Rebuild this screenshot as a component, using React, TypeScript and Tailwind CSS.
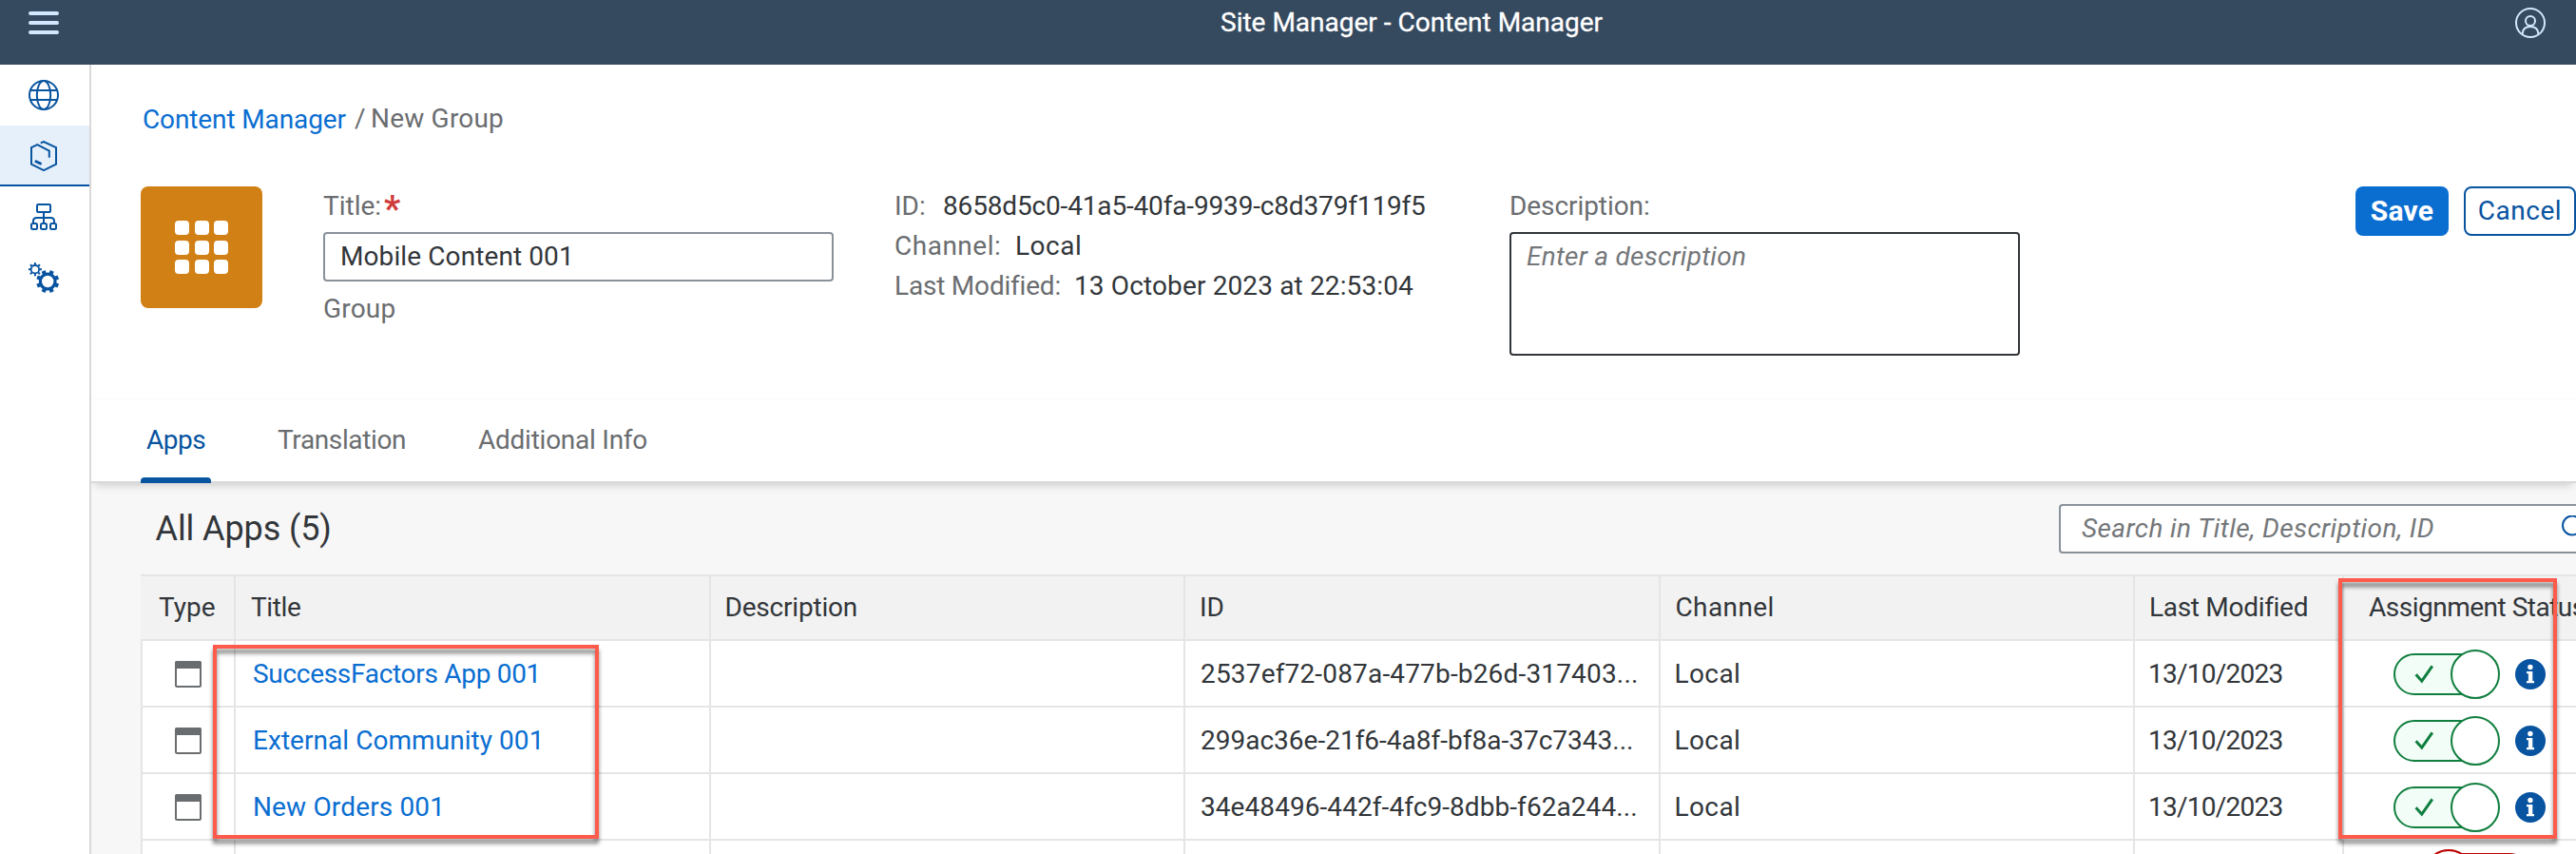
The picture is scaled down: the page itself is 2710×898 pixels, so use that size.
import type { ReactNode } from "react";

function GlobeIcon() {
  return (
    <svg width="32" height="32" viewBox="0 0 32 32" fill="none" stroke="#0854a0" strokeWidth="2">
      <circle cx="16" cy="16" r="15" />
      <ellipse cx="16" cy="16" rx="7.2" ry="15" />
      <path d="M2 11H30M2 21H30" />
    </svg>
  );
}

function ProductIcon() {
  return (
    <svg width="32" height="32" viewBox="0 0 32 32" fill="none" stroke="#0854a0" strokeWidth="2">
      <path d="M12.7 2.4L16 1L29 7.2V24.6L16 31.1L3 24.6V7.2L9.3 4.2L21.8 10.6V17.8" />
      <path d="M6.8 21.2L13.6 24.6" strokeWidth="2.8" />
    </svg>
  );
}

function HierarchyIcon() {
  return (
    <svg width="32" height="32" viewBox="0 0 32 32" fill="none" stroke="#0854a0" strokeWidth="2">
      <rect x="9" y="3" width="14" height="8" rx="1" />
      <path d="M16 11V23M5 23V20.5Q5 17 8.5 17H23.5Q27 17 27 20.5V23" />
      <rect x="3" y="23" width="6" height="6" rx="1.5" />
      <rect x="13" y="23" width="6" height="6" rx="1.5" />
      <rect x="23" y="23" width="6" height="6" rx="1.5" />
    </svg>
  );
}

const TEETH = [0, 45, 90, 135, 180, 225, 270, 315];

function GearsIcon() {
  return (
    <svg width="32" height="32" viewBox="0 0 32 32" fill="none" stroke="#0854a0">
      <g transform="translate(6.9 7.2)">
        <circle r="4.2" strokeWidth="1.8" />
        {TEETH.map((a) => (
          <path key={a} d="M0 -4.5V-7.1" strokeWidth="2" transform={`rotate(${a})`} />
        ))}
      </g>
      <g transform="translate(20.2 20)">
        <circle r="7.8" strokeWidth="3.2" />
        {TEETH.map((a) => (
          <path key={a} d="M0 -8.5V-12" strokeWidth="4.2" transform={`rotate(${a + 22.5})`} />
        ))}
      </g>
    </svg>
  );
}

function UserIcon() {
  return (
    <svg width="32" height="32" viewBox="0 0 32 32" fill="none" stroke="#d1e8ff" strokeWidth="2">
      <circle cx="16" cy="16" r="15" />
      <circle cx="16" cy="14" r="5" />
      <path d="M7.8 28.3C7.8 23 11 20.6 16 20.6S24.2 23 24.2 28.3" transform="translate(0 -.6)" />
    </svg>
  );
}

function InfoIcon() {
  return (
    <svg width="32" height="32" viewBox="0 0 32 32">
      <circle cx="16" cy="16" r="16" fill="#0854a0" />
      <circle cx="15.9" cy="8.5" r="2.7" fill="#fff" />
      <path d="M12 13H18.3V23H20V25.2H12V23H13.9V15.2H12Z" fill="#fff" />
    </svg>
  );
}

function AppIcon() {
  return (
    <svg width="28" height="28" viewBox="0 0 28 28">
      <rect x="1" y="1" width="26" height="26" rx="1.5" fill="#fff" stroke="#6a6d70" strokeWidth="2" />
      <path d="M0 8V2Q0 0 2 0H26Q28 0 28 2V8Z" fill="#6a6d70" />
    </svg>
  );
}

function Toggle({ on }: { on: boolean }) {
  return on ? (
    <svg width="112" height="52" viewBox="0 0 112 52" fill="none" stroke="#107e3e" strokeWidth="2">
      <rect x="1" y="5" width="108" height="42" rx="21" fill="#f1fdf6" />
      <path d="M23.6 26.3L29.8 33.2L40.8 17.4" strokeWidth="3" />
      <circle cx="86" cy="26" r="25" fill="#fff" />
    </svg>
  ) : (
    <svg width="112" height="52" viewBox="0 0 112 52" fill="none" stroke="#bb0000" strokeWidth="2">
      <rect x="3" y="5" width="108" height="42" rx="21" fill="#ffebeb" />
      <circle cx="26" cy="26" r="25" fill="#fff" />
    </svg>
  );
}

const apps = [
  { title: "SuccessFactors App 001", id: "2537ef72-087a-477b-b26d-317403...", titleCls: "tracking-[-0.3px]", idCls: "tracking-[0.17px]" },
  { title: "External Community 001", id: "299ac36e-21f6-4a8f-bf8a-37c7343...", titleCls: "tracking-[0.05px]", idCls: "" },
  { title: "New Orders 001", id: "34e48496-442f-4fc9-8dbb-f62a244...", titleCls: "tracking-[0.15px]", idCls: "tracking-[0.07px]" },
];

const GRID = "grid grid-cols-[100px_499.5px_499.5px_499.5px_499.5px_220px_400px]";

function Cell({ children, className = "" }: { children?: ReactNode; className?: string }) {
  return <div className={`box-border overflow-hidden border-r-2 border-[#e5e5e5] ${className}`}>{children}</div>;
}

export default function App() {
  return (
    <div className="relative flex h-[898px] w-full flex-col overflow-hidden bg-white font-['Roboto',sans-serif] text-[28px] leading-[33px] whitespace-nowrap text-[#32363a]">
      <header className="flex h-[68px] shrink-0 items-start bg-[#354a5f]">
        <div className="mt-3 ml-[30px] flex w-8 flex-col gap-1.5">
          <div className="h-1 rounded-full bg-[#d1e8ff]" />
          <div className="h-1 rounded-full bg-[#d1e8ff]" />
          <div className="h-1 rounded-full bg-[#d1e8ff]" />
        </div>
        <div className="mt-[7px] ml-[1222px] flex-1 text-white [-webkit-text-stroke:0.3px_white]">Site Manager - Content Manager</div>
        <div className="mt-2 mr-8">
          <UserIcon />
        </div>
      </header>

      <div className="flex min-h-0 flex-1">
        <nav className="flex w-24 shrink-0 flex-col border-r-2 border-[#d9d9d9]">
          <div className="flex h-16 pt-4 pl-[30px]"><GlobeIcon /></div>
          <div className="flex h-16 border-b-2 border-[#0854a0] bg-[#e5f0fa] pt-4 pl-[30px]"><ProductIcon /></div>
          <div className="flex h-16 pt-4 pl-[30px]"><HierarchyIcon /></div>
          <div className="flex h-16 pt-4 pl-[30px]"><GearsIcon /></div>
        </nav>

        <main className="flex min-w-0 flex-1 flex-col overflow-hidden bg-[#f7f7f7]">
          <section className="h-[351px] shrink-0 bg-white pt-10 pl-[52px]">
            <div className="flex h-[34px] items-start">
              <span className="mt-px w-[223px] pl-0.5 tracking-[-0.12px] text-[#0a6ed1]">Content Manager</span>
              <span className="w-[19px] pl-0.5 text-[#6a6d70]">/</span>
              <span className="tracking-[0.2px] text-[#6a6d70]">New Group</span>
            </div>

            <div className="mt-[54px] flex items-start">
              <div className="grid size-32 shrink-0 grid-cols-[15px_15px_15px] content-center justify-center gap-[5.5px] rounded-lg bg-[#d08014]">
                {Array.from({ length: 9 }, (_, i) => (
                  <div key={i} className="h-[15px] rounded-[4px] bg-white" />
                ))}
              </div>

              <div className="ml-16 w-[537px] shrink-0 pt-1">
                <div className="flex h-11 items-start">
                  <span className="w-[64px] text-[#6a6d70]">Title:</span>
                  <span className="-mt-px text-[38px] leading-[42px] font-bold text-[#d03b3b]">*</span>
                </div>
                <div className="h-[52px] rounded-[4px] border-2 border-[#89919a] pt-[7px] pl-[16px] tracking-[0.1px]">Mobile Content 001</div>
                <div className="mt-3 tracking-[0.2px] text-[#6a6d70]">Group</div>
              </div>

              <div className="ml-[64px] w-[647px] shrink-0 pt-1">
                <div className="flex h-[42px]">
                  <span className="w-[51px] text-[#6a6d70]">ID:</span>
                  <span className="tracking-[-0.16px]">8658d5c0-41a5-40fa-9939-c8d379f119f5</span>
                </div>
                <div className="flex h-[42px]">
                  <span className="w-[127px] tracking-[0.5px] text-[#6a6d70]">Channel:</span>
                  <span className="tracking-[0.5px]">Local</span>
                </div>
                <div className="flex h-[42px]">
                  <span className="w-[189px] tracking-[-0.2px] text-[#6a6d70]">Last Modified:</span>
                  <span className="tracking-[0.13px]">13 October 2023 at 22:53:04</span>
                </div>
              </div>

              <div className="w-[537px] shrink-0 pt-1">
                <div className="h-11 tracking-[-0.07px] text-[#6a6d70]">Description:</div>
                <div className="h-[130px] rounded-[4px] border-2 border-[#32363a] pt-[7px] pl-[16px] tracking-[0.25px] text-[#74777a] italic">Enter a description</div>
              </div>

              <div className="ml-[353px] flex shrink-0 gap-4">
                <button className="h-[52px] w-[98px] rounded-lg bg-[#0a6ed1] pb-px text-[30px] leading-[33px] font-bold tracking-[0.2px] text-white">Save</button>
                <button className="h-[52px] w-[118px] rounded-lg border-2 border-[#0854a0] pb-px tracking-[0.52px] text-[#0854a0]">Cancel</button>
              </div>
            </div>
          </section>

          <section className="z-10 flex h-[89px] shrink-0 border-t border-b-2 border-t-[#fafafa] border-b-[#d9d9d9] bg-white pl-[52px] shadow-[0_6px_9px_-4px_rgba(0,0,0,0.18)]">
            <div className="relative w-[74px] pt-[26px] pl-1.5 tracking-[-0.5px] text-[#0854a0]">
              Apps
              <div className="absolute -bottom-0.5 left-0 h-1.5 w-[74px] rounded-t-[4px] bg-[#0854a0]" />
            </div>
            <div className="ml-[70px] w-[211px] pt-[26px] tracking-[-0.37px] text-[#6a6d70]">Translation</div>
            <div className="pt-[26px] tracking-[-0.25px] text-[#6a6d70]">Additional Info</div>
          </section>

          <section className="pl-[52px]">
            <div className="flex h-24 items-start">
              <h2 className="mt-[27px] ml-[15.5px] w-[2002.5px] shrink-0 text-[36px] leading-[42px] tracking-[-0.1px]">All Apps (5)</h2>
              <div className="mt-[22px] flex h-[52px] w-[600px] shrink-0 items-start rounded-[4px] border-2 border-[#89919a] bg-white pt-[7px] pl-[22px] text-[#74777a] italic">
                <span className="w-[503px] tracking-[0.4px]">Search in Title, Description, ID</span>
                <svg width="32" height="32" viewBox="0 0 32 32" fill="none" stroke="#0854a0" strokeWidth="2" className="mt-[3px]">
                  <circle cx="13" cy="10.5" r="10" />
                  <path d="M20 18L30 29" />
                </svg>
              </div>
            </div>

            <div className={`${GRID} h-[70px] border-y-2 border-[#e5e5e5] bg-[#f2f2f2] *:pt-4`}>
              <Cell className="pl-[19px]">Type</Cell>
              <Cell className="pl-4 tracking-[-0.4px]">Title</Cell>
              <Cell className="pl-[15px] tracking-[-0.2px]">Description</Cell>
              <Cell className="pl-[15px]">ID</Cell>
              <Cell className="pl-[16px] tracking-[0.4px]">Channel</Cell>
              <Cell className="pl-[15px] tracking-[-0.3px]">Last Modified</Cell>
              <Cell className="pl-[26px] tracking-[-0.5px]">Assignment Status</Cell>
            </div>

            {apps.map((app) => (
              <div key={app.title} className={`${GRID} h-[70px] border-b-2 border-[#e5e5e5] bg-white`}>
                <Cell className="border-l-2 pt-[21px] pl-[34px]"><AppIcon /></Cell>
                <Cell className={`pt-[18px] pl-[18px] text-[#0a6ed1] ${app.titleCls}`}>{app.title}</Cell>
                <Cell />
                <Cell className={`pt-[18px] pl-[16px] ${app.idCls}`}>{app.id}</Cell>
                <Cell className="pt-[18px] pl-[15px] tracking-[0.4px]">Local</Cell>
                <Cell className="pt-[18px] pl-[14px] tracking-[-0.75px]">13/10/2023</Cell>
                <Cell className="flex items-start gap-4 pt-[9px] pl-[52px]">
                  <Toggle on />
                  <div className="mt-2.5"><InfoIcon /></div>
                </Cell>
              </div>
            ))}

            <div className={`${GRID} h-[70px] bg-white`}>
              <Cell className="border-l-2" />
              <Cell />
              <Cell />
              <Cell />
              <Cell />
              <Cell />
              <Cell className="pt-[9px] pl-[84px]"><Toggle on={false} /></Cell>
            </div>
          </section>
        </main>
      </div>

      <div className="pointer-events-none absolute top-[678px] left-[224px] z-20 h-[204px] w-[406px] border-4 border-[#ff5b4c] drop-shadow-[0_5px_2px_rgba(0,0,0,0.5)]" />
      <div className="pointer-events-none absolute top-[608px] left-[2460px] z-20 h-[274px] w-[230px] border-4 border-[#ff5b4c] drop-shadow-[0_5px_2px_rgba(0,0,0,0.5)]" />
    </div>
  );
}
